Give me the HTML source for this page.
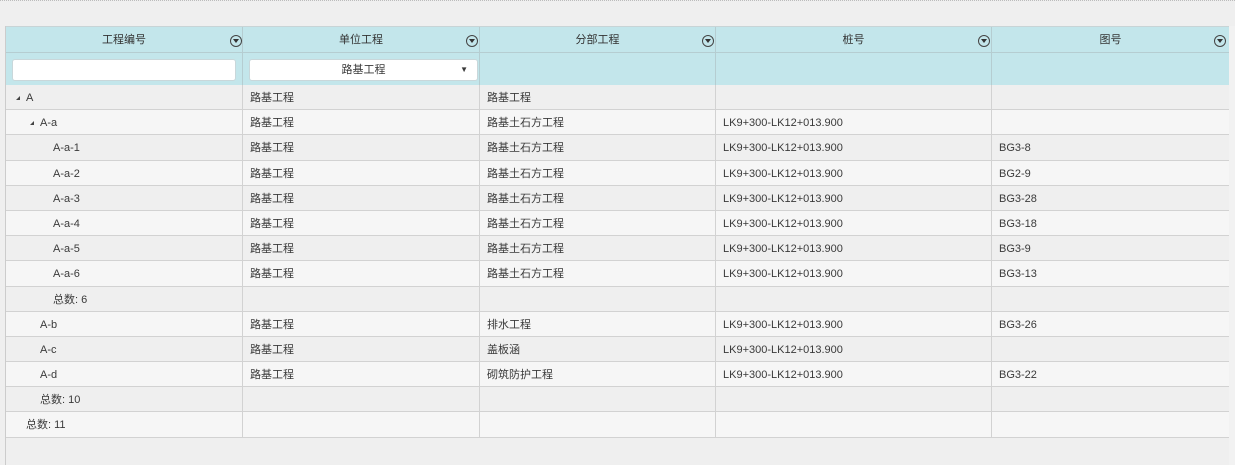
<!DOCTYPE html>
<html><head><meta charset="utf-8"><style>
*{box-sizing:border-box;margin:0;padding:0}
body{width:1235px;height:465px;background:#efefef;font-family:"Liberation Sans","Noto Sans CJK SC",sans-serif;font-size:11px;color:#3a3a3a;position:relative;overflow:hidden}
.top{position:absolute;left:0;top:0;width:1235px;height:2px;border-top:1px dotted #bbb}
.lb{position:absolute;left:5px;top:26px;width:1px;height:439px;background:#ccc}
.hdr{position:absolute;left:6px;top:26px;width:1223px;height:60px;background:#c3e6eb;border-top:1px solid #c8d4d6;border-bottom:1px solid #c8c8c8}
.hrow{position:absolute;left:0;top:0;height:26px;width:100%;border-bottom:1px solid #b5cdd1}
.hc{position:absolute;top:0;height:58px;border-right:1px solid #b5cdd1}
.ht{position:absolute;top:0;left:0;right:0;height:26px;line-height:26px;text-align:center;font-size:11px;color:#333}
.fi{position:absolute;top:8px;width:12px;height:12px;border:1.3px solid #444;border-radius:50%}
.fi:after{content:"";position:absolute;left:2px;top:2.5px;border-left:3px solid transparent;border-right:3px solid transparent;border-top:4px solid #333}
.inp{position:absolute;top:32px;height:22px;background:#fff;border:1px solid #c9d7da;border-radius:3px;text-align:center;line-height:20px}
.rows{position:absolute;left:6px;top:85px;width:1223px}
.r{height:25.2px;border-bottom:1px solid #d2d2d2;position:relative;line-height:26px}
.r:nth-child(odd){background:#efefef}.r:nth-child(even){background:#f6f6f6}
.r span{position:absolute;top:0;white-space:nowrap}
.c1{left:0}.c2{left:244px}.c3{left:481px}.c4{left:717px}.c5{left:993px}
.vl{position:absolute;top:85px;height:353px;width:1px;background:#d2d2d2}
.tri{display:inline-block;width:0;height:0;border-left:4px solid transparent;border-bottom:4px solid #444;margin-right:6px;vertical-align:1px}
.sb{position:absolute;left:1229px;top:26px;width:6px;height:439px;background:#f2f2f2}
</style></head><body>
<div class="top"></div>
<div class="lb"></div>
<div class="sb"></div>
<div class="hdr">
 <div class="hrow"></div>
 <div class="hc" style="left:0;width:237px"><div class="ht">工程编号</div><div class="fi" style="left:224px"></div></div>
 <div class="hc" style="left:237px;width:237px"><div class="ht">单位工程</div><div class="fi" style="left:223px"></div></div>
 <div class="hc" style="left:474px;width:236px"><div class="ht">分部工程</div><div class="fi" style="left:222px"></div></div>
 <div class="hc" style="left:710px;width:276px"><div class="ht">桩号</div><div class="fi" style="left:262px"></div></div>
 <div class="hc" style="left:986px;width:237px;border-right:none"><div class="ht">图号</div><div class="fi" style="left:222px"></div></div>
 <div class="inp" style="left:6px;width:224px;top:32px"></div>
 <div class="inp" style="left:243px;width:229px;top:32px">路基工程<span style="position:absolute;right:9px;top:0;font-size:8px">▼</span></div>
</div>
<div class="rows">
<div class="r"><span class="c1" style="left:10px"><i class="tri"></i>A</span><span class="c2">路基工程</span><span class="c3">路基工程</span></div>
<div class="r"><span class="c1" style="left:24px"><i class="tri"></i>A-a</span><span class="c2">路基工程</span><span class="c3">路基土石方工程</span><span class="c4">LK9+300-LK12+013.900</span></div>
<div class="r"><span class="c1" style="left:47px">A-a-1</span><span class="c2">路基工程</span><span class="c3">路基土石方工程</span><span class="c4">LK9+300-LK12+013.900</span><span class="c5">BG3-8</span></div>
<div class="r"><span class="c1" style="left:47px">A-a-2</span><span class="c2">路基工程</span><span class="c3">路基土石方工程</span><span class="c4">LK9+300-LK12+013.900</span><span class="c5">BG2-9</span></div>
<div class="r"><span class="c1" style="left:47px">A-a-3</span><span class="c2">路基工程</span><span class="c3">路基土石方工程</span><span class="c4">LK9+300-LK12+013.900</span><span class="c5">BG3-28</span></div>
<div class="r"><span class="c1" style="left:47px">A-a-4</span><span class="c2">路基工程</span><span class="c3">路基土石方工程</span><span class="c4">LK9+300-LK12+013.900</span><span class="c5">BG3-18</span></div>
<div class="r"><span class="c1" style="left:47px">A-a-5</span><span class="c2">路基工程</span><span class="c3">路基土石方工程</span><span class="c4">LK9+300-LK12+013.900</span><span class="c5">BG3-9</span></div>
<div class="r"><span class="c1" style="left:47px">A-a-6</span><span class="c2">路基工程</span><span class="c3">路基土石方工程</span><span class="c4">LK9+300-LK12+013.900</span><span class="c5">BG3-13</span></div>
<div class="r"><span class="c1" style="left:47px">总数: 6</span></div>
<div class="r"><span class="c1" style="left:34px">A-b</span><span class="c2">路基工程</span><span class="c3">排水工程</span><span class="c4">LK9+300-LK12+013.900</span><span class="c5">BG3-26</span></div>
<div class="r"><span class="c1" style="left:34px">A-c</span><span class="c2">路基工程</span><span class="c3">盖板涵</span><span class="c4">LK9+300-LK12+013.900</span></div>
<div class="r"><span class="c1" style="left:34px">A-d</span><span class="c2">路基工程</span><span class="c3">砌筑防护工程</span><span class="c4">LK9+300-LK12+013.900</span><span class="c5">BG3-22</span></div>
<div class="r"><span class="c1" style="left:34px">总数: 10</span></div>
<div class="r"><span class="c1" style="left:20px">总数: 11</span></div>
</div>
<div class="vl" style="left:242px"></div>
<div class="vl" style="left:479px"></div>
<div class="vl" style="left:715px"></div>
<div class="vl" style="left:991px"></div>
</body></html>
